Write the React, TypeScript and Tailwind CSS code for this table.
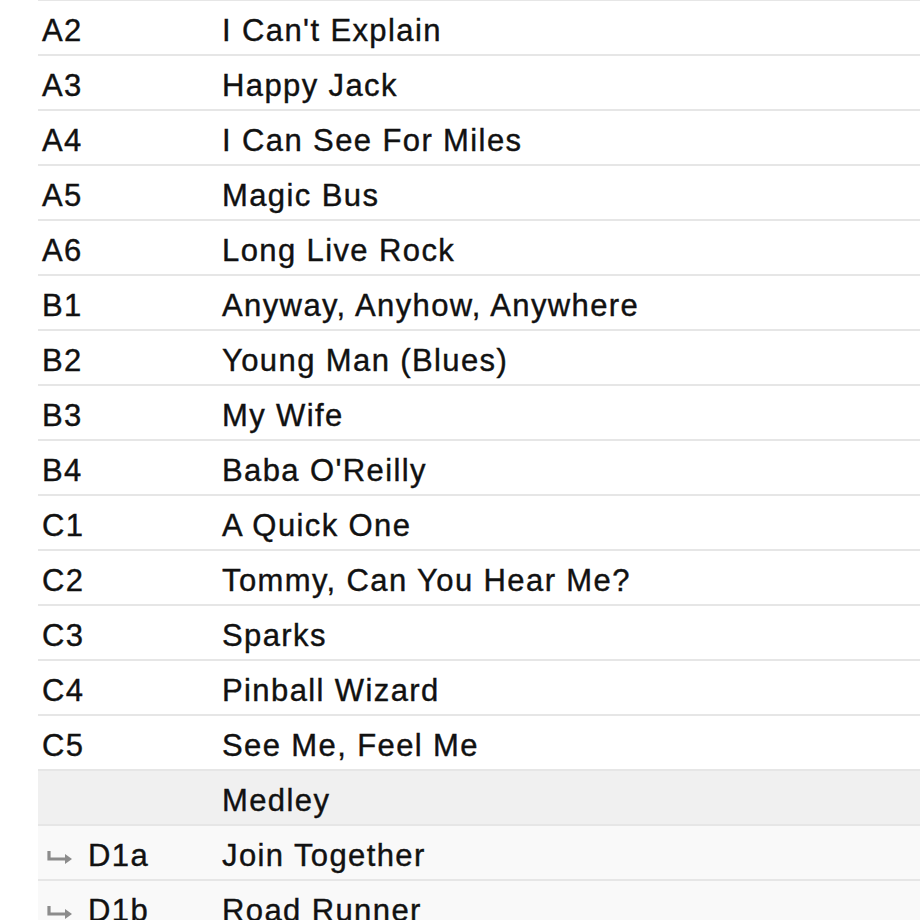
import React from "react";

type Track = {
	pos: string;
	title: string;
	kind?: "heading" | "sub";
};

const tracks: Track[] = [
	{ pos: "A2", title: "I Can't Explain" },
	{ pos: "A3", title: "Happy Jack" },
	{ pos: "A4", title: "I Can See For Miles" },
	{ pos: "A5", title: "Magic Bus" },
	{ pos: "A6", title: "Long Live Rock" },
	{ pos: "B1", title: "Anyway, Anyhow, Anywhere" },
	{ pos: "B2", title: "Young Man (Blues)" },
	{ pos: "B3", title: "My Wife" },
	{ pos: "B4", title: "Baba O'Reilly" },
	{ pos: "C1", title: "A Quick One" },
	{ pos: "C2", title: "Tommy, Can You Hear Me?" },
	{ pos: "C3", title: "Sparks" },
	{ pos: "C4", title: "Pinball Wizard" },
	{ pos: "C5", title: "See Me, Feel Me" },
	{ pos: "", title: "Medley", kind: "heading" },
	{ pos: "D1a", title: "Join Together", kind: "sub" },
	{ pos: "D1b", title: "Road Runner", kind: "sub" },
];

const SubArrow = () => (
	<svg width="28" height="18" viewBox="0 0 28 18" className="shrink-0 text-[#8c8c8c]">
		<path d="M3 2 V10 H22" fill="none" stroke="currentColor" strokeWidth="3.2" />
		<path d="M19 5 L26 10 L19 15 Z" fill="currentColor" />
	</svg>
);

export default function App() {
	return (
		<div className="w-[920px] h-[920px] overflow-hidden bg-white font-['Liberation_Sans'] text-[31px] tracking-[0.045em] text-[#111111] [-webkit-text-stroke:0.4px_#111111]">
			<div className="ml-[38px] -mt-[1px] border-t-2 border-[#e6e6e6]">
				{tracks.map((t, i) => (
					<div
						key={i}
						className={
							"flex h-[55px] items-center pt-[8px] border-b-2 border-[#e6e6e6] " +
							(t.kind === "heading" ? "bg-[#f0f0f0]" : t.kind === "sub" ? "bg-[#f9f9f9]" : "bg-white")
						}
					>
						{/* position column */}
						<div className="flex w-[184px] items-center pl-[4px]">
							{t.kind === "sub" ? (
								<>
									<span className="ml-[4px] mr-[14px] mt-[2px]">
										<SubArrow />
									</span>
									<span>{t.pos}</span>
								</>
							) : (
								<span>{t.pos}</span>
							)}
						</div>
						<div className="whitespace-nowrap">{t.title}</div>
					</div>
				))}
			</div>
		</div>
	);
}
